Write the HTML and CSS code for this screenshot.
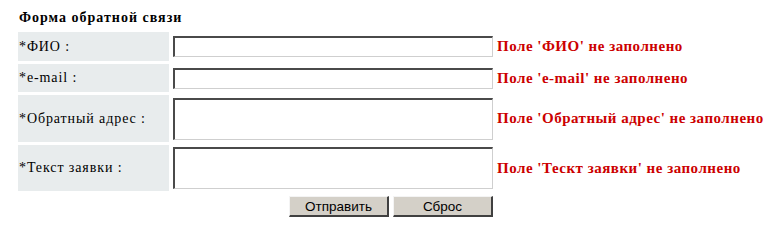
FILE: index.html
```html
<!DOCTYPE html>
<html>
<head>
<meta charset="utf-8">
<link rel="stylesheet" href="styles.css">
</head>
<body>
<div class="page">
  <div class="title">Форма обратной связи</div>
  <div class="form">
    <div class="label">*ФИО :</div>
    <div class="field"><input class="inp" type="text"></div>
    <div class="err">Поле 'ФИО' не заполнено</div>

    <div class="label">*e-mail :</div>
    <div class="field"><input class="inp" type="text"></div>
    <div class="err">Поле 'e-mail' не заполнено</div>

    <div class="label">*Обратный адрес :</div>
    <div class="field"><textarea class="ta"></textarea></div>
    <div class="err">Поле 'Обратный адрес' не заполнено</div>

    <div class="label">*Текст заявки :</div>
    <div class="field"><textarea class="ta"></textarea></div>
    <div class="err">Поле 'Тескт заявки' не заполнено</div>

    <div class="buttons">
      <button class="btn">Отправить</button>
      <button class="btn">Сброс</button>
    </div>
  </div>
</div>
</body>
</html>
```
FILE: styles.css
```css
html, body {
  margin: 0;
  padding: 0;
  background: #ffffff;
}
.page {
  padding: 10px 0 0 18px;
  font-family: "Liberation Serif", "Times New Roman", serif;
  color: #000;
}
.title {
  font-weight: bold;
  font-size: 14px;
  letter-spacing: 1px;
  line-height: 16px;
  height: 16px;
  padding-left: 1px;
}
.form {
  margin-top: 6px;
  display: grid;
  grid-template-columns: 151px 320px auto;
  grid-template-rows: 29px 28px 47px 46px auto;
  column-gap: 4px;
  row-gap: 3px;
}
.label {
  background: #e8eced;
  font-size: 14px;
  letter-spacing: 0.9px;
  display: flex;
  align-items: center;
  padding-left: 1px;
}
.field {
  display: flex;
  align-items: center;
}
.inp, .ta {
  box-sizing: border-box;
  width: 320px;
  margin: 0;
  padding: 0;
  background: #fff;
  border-top: 2px solid #4a4a4a;
  border-left: 2px solid #4a4a4a;
  border-right: 1px solid #cfcfcf;
  border-bottom: 1px solid #cfcfcf;
  outline: none;
  resize: none;
}
.inp { height: 21px; }
.ta { height: 42px; }
.err {
  display: flex;
  align-items: center;
  font-weight: bold;
  font-size: 15px;
  letter-spacing: 0.5px;
  color: #cc0000;
  white-space: nowrap;
}
.buttons {
  grid-column: 2;
  display: flex;
  justify-content: flex-end;
  gap: 4px;
  margin-top: 2px;
}
.btn {
  box-sizing: border-box;
  width: 100px;
  height: 21px;
  margin: 0;
  padding: 0;
  background: #d4d0c8;
  font-family: "Liberation Sans", Arial, sans-serif;
  font-size: 13.5px;
  color: #000;
  border-top: 1px solid #f4f4f4;
  border-left: 1px solid #f4f4f4;
  border-right: 2px solid #404040;
  border-bottom: 2px solid #404040;
}
```
